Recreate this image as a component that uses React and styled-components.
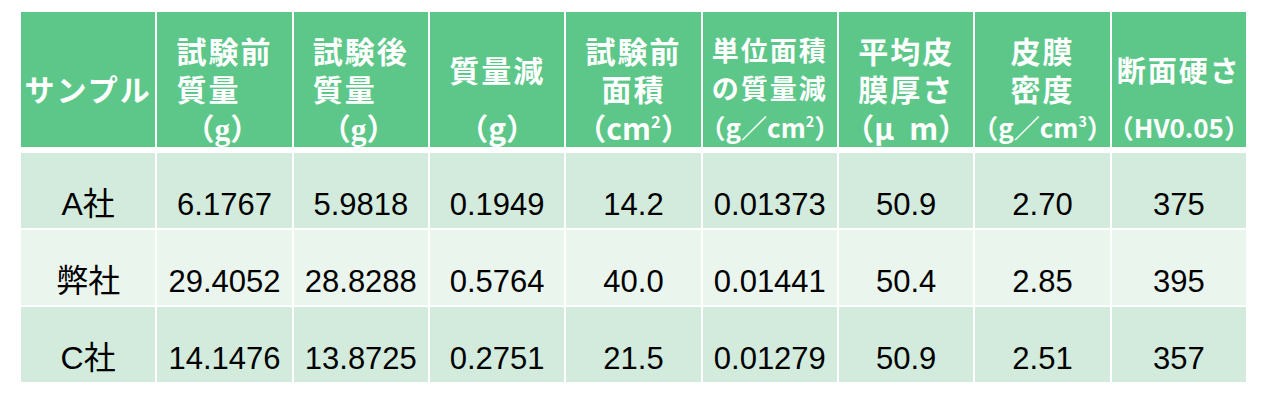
import React from 'react';
import styled, { createGlobalStyle } from 'styled-components';

const GlobalStyle = createGlobalStyle`
  body {
    margin: 0;
    background: #ffffff;
  }
`;

const Page = styled.div`
  padding: 12px 0 0 21px;
`;

const Table = styled.div`
  width: 1225px;
  display: flex;
  flex-direction: column;
  gap: 2px;
`;

const Row = styled.div`
  display: grid;
  grid-template-columns: repeat(9, minmax(0, 1fr));
  column-gap: 2px;
`;

const HeadRow = styled(Row)`
  margin-bottom: 4px;
`;

const HeadCell = styled.div`
  height: 135px;
  min-width: 0;
  box-sizing: border-box;
  padding-bottom: 1px;
  background: #5dc78a;
  color: #ffffff;
  display: grid;
  grid-template-columns: max-content;
  grid-template-rows: repeat(3, 38.5px);
  justify-content: center;
  align-content: end;
  justify-items: ${(props) => props.$align || 'center'};
  align-items: center;
  font-family: 'Noto Sans CJK JP', sans-serif;
  font-weight: 700;
`;

const Line = styled.div`
  grid-row: ${(props) => props.$row || 'auto'};
  padding-left: ${(props) => props.$indent || 0}px;
  font-size: ${(props) => props.$size || 30}px;
  letter-spacing: ${(props) => (props.$latin ? 0 : 2)}px;
  line-height: 38.5px;
  white-space: nowrap;
  sup {
    font-size: 0.55em;
    vertical-align: 0.75em;
    line-height: 0;
  }
`;

const SerifG = styled.span`
  font-family: 'Liberation Serif', serif;
  font-weight: 700;
  font-size: 1.05em;
  line-height: 0;
`;

const Cell = styled.div`
  height: 75px;
  box-sizing: border-box;
  padding-top: 27px;
  background: ${(props) => (props.$light ? '#eaf5ee' : '#d3ebdc')};
  display: flex;
  align-items: center;
  justify-content: center;
  font-family: 'Liberation Sans', 'Noto Sans CJK JP', sans-serif;
  font-size: ${(props) => (props.$name ? 32 : 31)}px;
  line-height: 1;
  color: #000000;
`;

const headers = [
  { lines: [{ row: 2, text: 'サンプル' }] },
  {
    align: 'start',
    lines: [
      { text: '試験前' },
      { text: '質量' },
      { text: <>（<SerifG>g</SerifG>）</>, latin: true, indent: 8 },
    ],
  },
  {
    align: 'start',
    lines: [
      { text: '試験後' },
      { text: '質量' },
      { text: <>（<SerifG>g</SerifG>）</>, latin: true, indent: 8 },
    ],
  },
  {
    lines: [
      { row: '1 / span 2', text: '質量減' },
      { row: 3, text: '（g）', latin: true },
    ],
  },
  {
    lines: [
      { text: '試験前' },
      { text: '面積' },
      { text: <>（cm<sup>2</sup>）</>, latin: true },
    ],
  },
  {
    lines: [
      { text: '単位面積', size: 27 },
      { text: 'の質量減', size: 27 },
      { text: <>（g／cm<sup>2</sup>）</>, size: 26, latin: true },
    ],
  },
  {
    lines: [
      { text: '平均皮' },
      { text: '膜厚さ' },
      { text: '（μ\u2002m）', latin: true },
    ],
  },
  {
    lines: [
      { text: '皮膜' },
      { text: '密度' },
      { text: <>（g／cm<sup>3</sup>）</>, size: 26, latin: true },
    ],
  },
  {
    lines: [
      { row: '1 / span 2', text: '断面硬さ', size: 29 },
      { row: 3, text: '（HV0.05）', size: 26, latin: true },
    ],
  },
];

const rows = [
  ['A社', '6.1767', '5.9818', '0.1949', '14.2', '0.01373', '50.9', '2.70', '375'],
  ['弊社', '29.4052', '28.8288', '0.5764', '40.0', '0.01441', '50.4', '2.85', '395'],
  ['C社', '14.1476', '13.8725', '0.2751', '21.5', '0.01279', '50.9', '2.51', '357'],
];

function App() {
  return (
    <>
      <GlobalStyle />
      <Page>
        <Table>
          <HeadRow>
            {headers.map((head, i) => (
              <HeadCell key={i} $align={head.align}>
                {head.lines.map((line, j) => (
                  <Line
                    key={j}
                    $row={line.row}
                    $size={line.size}
                    $latin={line.latin}
                    $indent={line.indent}
                  >
                    {line.text}
                  </Line>
                ))}
              </HeadCell>
            ))}
          </HeadRow>
          {rows.map((row, i) => (
            <Row key={row[0]}>
              {row.map((value, j) => (
                <Cell key={j} $light={i % 2 === 1} $name={j === 0}>
                  {value}
                </Cell>
              ))}
            </Row>
          ))}
        </Table>
      </Page>
    </>
  );
}

export default App;
